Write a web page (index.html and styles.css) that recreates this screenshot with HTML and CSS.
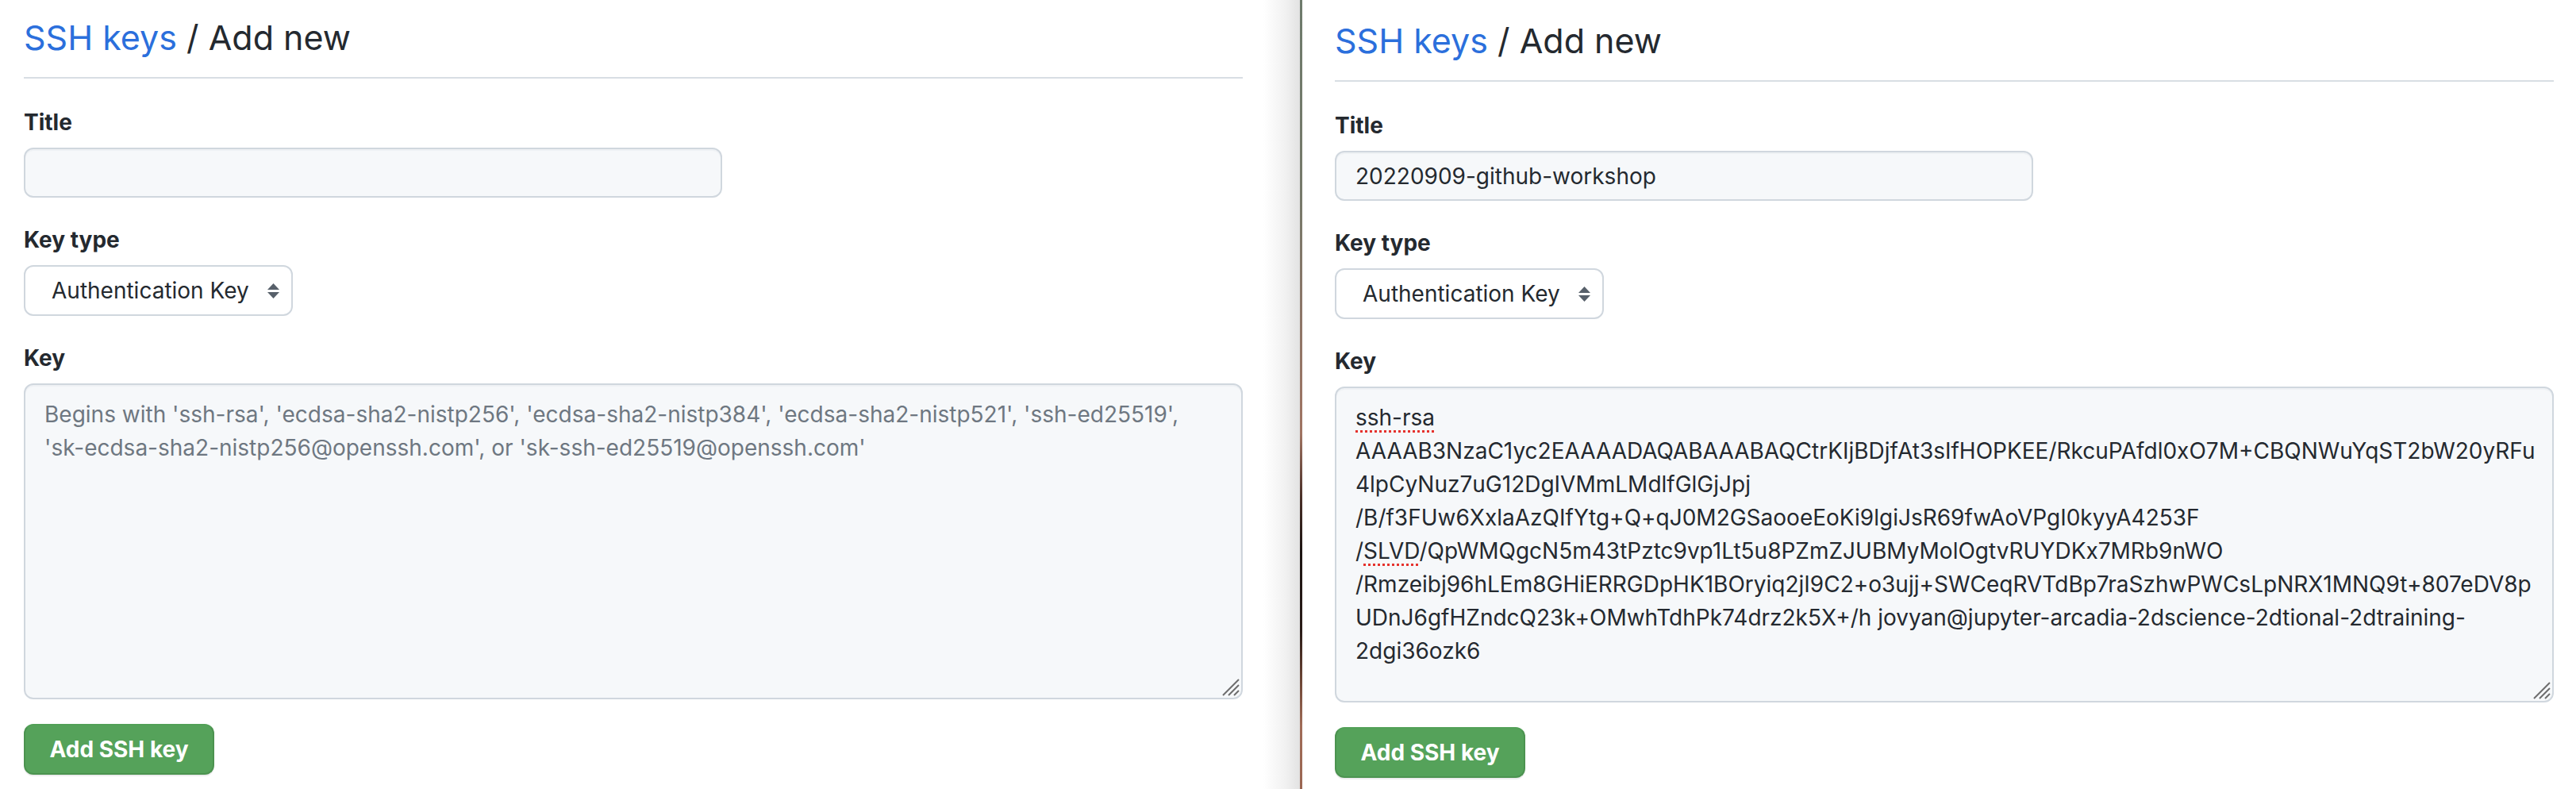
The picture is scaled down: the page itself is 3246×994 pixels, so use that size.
FILE: index.html
```html
<!DOCTYPE html>
<html lang="en">
<head>
<meta charset="utf-8">
<title>SSH keys / Add new</title>
<link rel="stylesheet" href="styles.css">
</head>
<body>
<div class="screen">
  <section class="panel panel-left">
    <div class="content">
      <div class="subhead">
        <h2 class="subhead-heading"><a class="crumb" href="#">SSH keys</a> / Add new</h2>
      </div>
      <form class="form">
        <div class="form-group first">
          <label class="label">Title</label>
          <input class="input" type="text" value="">
        </div>
        <div class="form-group">
          <label class="label">Key type</label>
          <div class="select">
            <span class="select-text">Authentication Key</span>
            <svg class="select-arrows" width="15" height="19" viewBox="0 0 15 19"><polygon points="0,8 7.5,0 15,8" fill="#57606a"/><polygon points="0,11 15,11 7.5,19" fill="#57606a"/></svg>
          </div>
        </div>
        <div class="form-group">
          <label class="label">Key</label>
          <div class="textarea is-placeholder">
            <div class="line">Begins with 'ssh-rsa', 'ecdsa-sha2-nistp256', 'ecdsa-sha2-nistp384', 'ecdsa-sha2-nistp521', 'ssh-ed25519',</div>
            <div class="line">'sk-ecdsa-sha2-nistp256@openssh.com', or 'sk-ssh-ed25519@openssh.com'</div>
            <svg class="grip" width="24" height="24" viewBox="0 0 24 24"><path d="M23 3 L3 23 M23 10 L10 23 M23 17 L17 23" stroke="#6e6e6e" stroke-width="2" fill="none"/></svg>
          </div>
        </div>
        <div class="form-actions">
          <button class="btn-primary" type="button">Add SSH key</button>
        </div>
      </form>
    </div>
  </section>
  <div class="divider"></div>
  <section class="panel panel-right">
    <div class="content">
      <div class="subhead">
        <h2 class="subhead-heading"><a class="crumb" href="#">SSH keys</a> / Add new</h2>
      </div>
      <form class="form">
        <div class="form-group first">
          <label class="label">Title</label>
          <input class="input" type="text" value="20220909-github-workshop">
        </div>
        <div class="form-group">
          <label class="label">Key type</label>
          <div class="select">
            <span class="select-text">Authentication Key</span>
            <svg class="select-arrows" width="15" height="19" viewBox="0 0 15 19"><polygon points="0,8 7.5,0 15,8" fill="#57606a"/><polygon points="0,11 15,11 7.5,19" fill="#57606a"/></svg>
          </div>
        </div>
        <div class="form-group">
          <label class="label">Key</label>
          <div class="textarea">
            <div class="line"><span class="misspelled">ssh-rsa</span></div>
            <div class="line">AAAAB3NzaC1yc2EAAAADAQABAAABAQCtrKIjBDjfAt3sIfHOPKEE/RkcuPAfdl0xO7M+CBQNWuYqST2bW20yRFu</div>
            <div class="line">4lpCyNuz7uG12DgIVMmLMdlfGlGjJpj</div>
            <div class="line">/B/f3FUw6XxlaAzQIfYtg+Q+qJ0M2GSaooeEoKi9lgiJsR69fwAoVPgI0kyyA4253F</div>
            <div class="line">/<span class="misspelled">SLVD</span>/QpWMQgcN5m43tPztc9vp1Lt5u8PZmZJUBMyMolOgtvRUYDKx7MRb9nWO</div>
            <div class="line">/Rmzeibj96hLEm8GHiERRGDpHK1BOryiq2jI9C2+o3ujj+SWCeqRVTdBp7raSzhwPWCsLpNRX1MNQ9t+807eDV8p</div>
            <div class="line">UDnJ6gfHZndcQ23k+OMwhTdhPk74drz2k5X+/h jovyan@jupyter-arcadia-2dscience-2dtional-2dtraining-</div>
            <div class="line">2dgi36ozk6</div>
            <svg class="grip" width="24" height="24" viewBox="0 0 24 24"><path d="M23 3 L3 23 M23 10 L10 23 M23 17 L17 23" stroke="#6e6e6e" stroke-width="2" fill="none"/></svg>
          </div>
        </div>
        <div class="form-actions">
          <button class="btn-primary" type="button">Add SSH key</button>
        </div>
      </form>
    </div>
  </section>
</div>
</body>
</html>
```

FILE: styles.css
```css
* { box-sizing: border-box; }

html, body {
  margin: 0;
  padding: 0;
  background: #ffffff;
}

body {
  font-family: Inter, "Liberation Sans", "DejaVu Sans", sans-serif;
  color: #24292f;
}

.screen {
  display: flex;
  width: 3246px;
  height: 994px;
  overflow: hidden;
}

.panel {
  height: 994px;
}

.panel-left {
  width: 1638px;
  flex: 0 0 1638px;
  padding: 16px 0 0 30px;
  background: linear-gradient(to right, #ffffff 0, #ffffff calc(100% - 46px), #f1f1f1 calc(100% - 18px), #e2e2e2 100%);
}

.panel-right {
  flex: 1 1 auto;
  padding: 20px 0 0 41px;
  background: #ffffff;
}

.divider {
  flex: 0 0 3px;
  width: 3px;
  background: linear-gradient(to bottom,
    #6e7b6c 0%,
    #76796a 25%,
    #8a7668 38%,
    #a07462 55%,
    #4a3028 63%,
    #1c1412 70%,
    #2a1c18 80%,
    #6a4434 86%,
    #a06c58 92%,
    #9a6652 100%);
}

.content {
  width: 1536px;
}

/* Subhead */
.subhead {
  padding-bottom: 18px;
  border-bottom: 2px solid #d8dee4;
}

.subhead-heading {
  margin: 0;
  font-size: 43px;
  font-weight: 400;
  line-height: 63px;
  color: #24292f;
  white-space: nowrap;
}

.crumb {
  color: #2b6fdc;
  text-decoration: none;
}

/* Form */
.form {
  margin: 0;
}

.form-group {
  margin-top: 32px;
}

.form-group.first {
  margin-top: 34px;
}

.label {
  display: block;
  font-size: 28px;
  font-weight: 700;
  line-height: 42px;
  margin-bottom: 11px;
  color: #24292f;
}

.input {
  display: block;
  width: 880px;
  height: 63px;
  padding: 0 24px;
  font-family: inherit;
  font-size: 28px;
  color: #24292f;
  background: #f6f8fa;
  border: 2px solid #d0d7de;
  border-radius: 12px;
  box-shadow: inset 0 2px 0 rgba(208, 215, 222, 0.2);
  outline: none;
  appearance: none;
}

.select {
  display: flex;
  align-items: center;
  width: 339px;
  height: 64px;
  padding: 0 15px 0 33px;
  background: #ffffff;
  border: 2px solid #d0d7de;
  border-radius: 12px;
  font-size: 28px;
  color: #24292f;
}

.select-text {
  flex: 1 1 auto;
  white-space: nowrap;
}

.select-arrows {
  flex: 0 0 auto;
  display: block;
}

.textarea {
  position: relative;
  width: 1536px;
  height: 398px;
  padding: 16px 24px;
  font-size: 28px;
  line-height: 42px;
  color: #24292f;
  background: #f6f8fa;
  border: 2px solid #d0d7de;
  border-radius: 12px;
  box-shadow: inset 0 2px 0 rgba(208, 215, 222, 0.2);
  overflow: hidden;
}

.textarea .line {
  white-space: nowrap;
}

.textarea.is-placeholder {
  color: #6e7781;
}

.misspelled {
  text-decoration: underline dotted #e5322d;
  text-decoration-thickness: 3px;
  text-underline-offset: 6px;
}

.grip {
  position: absolute;
  right: 2px;
  bottom: 2px;
  display: block;
}

/* Actions */
.form-actions {
  margin-top: 31px;
}

.btn-primary {
  display: inline-flex;
  align-items: center;
  justify-content: center;
  width: 240px;
  height: 64px;
  padding: 0;
  font-family: inherit;
  font-size: 28px;
  font-weight: 700;
  color: #ffffff;
  background: #55a25a;
  border: 2px solid #4c9350;
  border-top-color: #52a057;
  border-radius: 12px;
  box-shadow: 0 2px 0 rgba(27, 31, 36, 0.08);
  cursor: pointer;
}
```
